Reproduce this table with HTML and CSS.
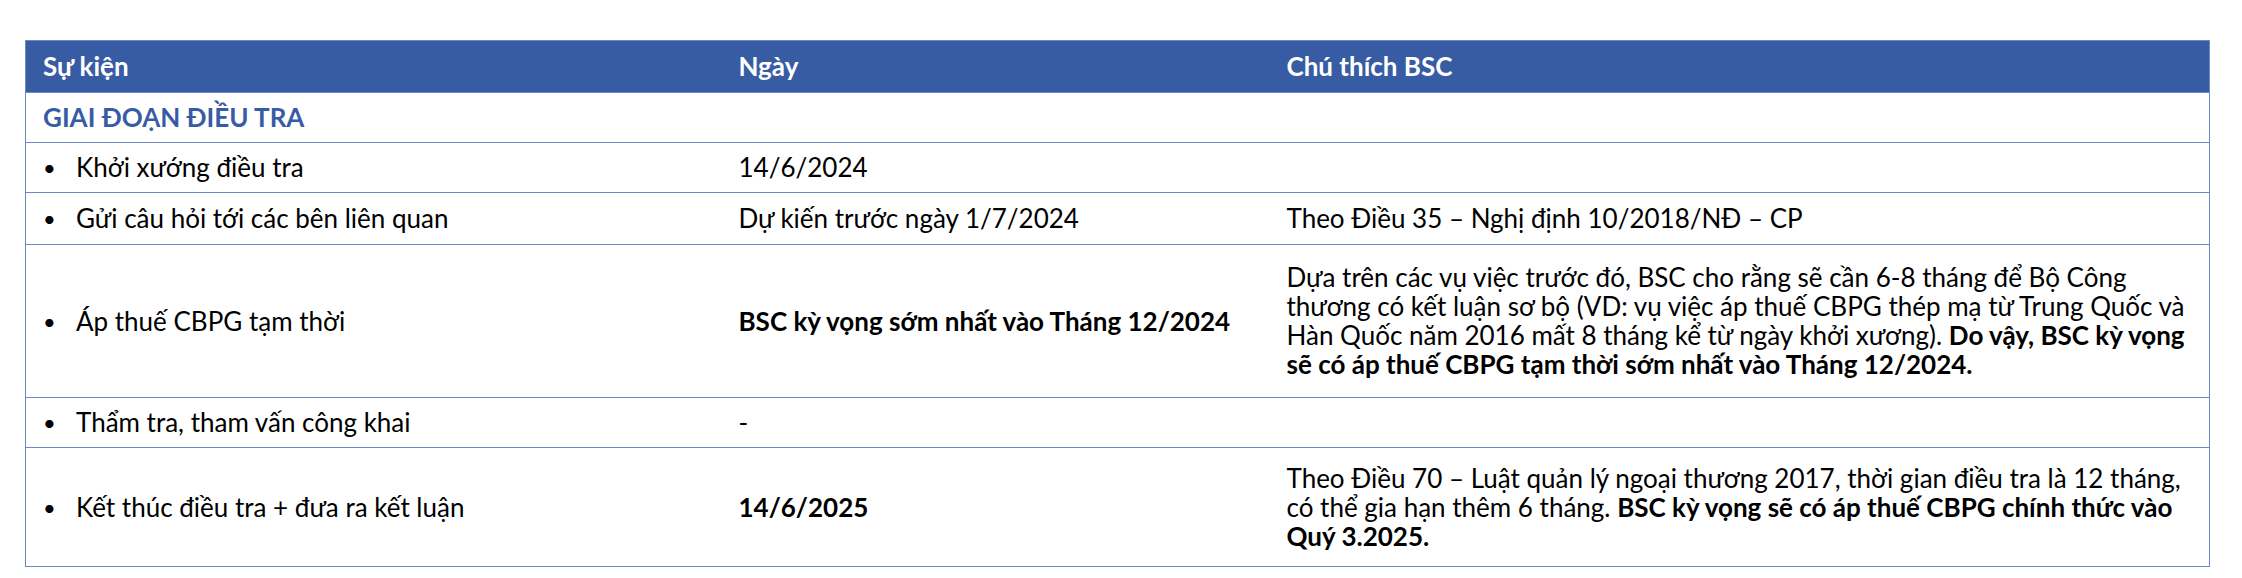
FILE: index.html
```html
<!DOCTYPE html>
<html lang="vi">
<head>
<meta charset="utf-8">
<title>Tiến trình điều tra CBPG</title>
<link rel="stylesheet" href="styles.css">
</head>
<body>
<table class="timeline">
  <colgroup>
    <col class="c-event">
    <col class="c-date">
    <col class="c-note">
  </colgroup>
  <thead>
    <tr class="row-head">
      <th>Sự kiện</th>
      <th>Ngày</th>
      <th>Chú thích BSC</th>
    </tr>
  </thead>
  <tbody>
    <tr class="row-phase">
      <td class="phase">GIAI ĐOẠN ĐIỀU TRA</td>
      <td></td>
      <td></td>
    </tr>
    <tr class="row-s">
      <td><div class="item"><span class="dot">•</span><span>Khởi xướng điều tra</span></div></td>
      <td>14/6/2024</td>
      <td></td>
    </tr>
    <tr class="row-s2">
      <td><div class="item"><span class="dot">•</span><span>Gửi câu hỏi tới các bên liên quan</span></div></td>
      <td>Dự kiến trước ngày 1/7/2024</td>
      <td>Theo Điều 35 – Nghị định 10/2018/NĐ – CP</td>
    </tr>
    <tr class="row-l">
      <td><div class="item"><span class="dot">•</span><span>Áp thuế CBPG tạm thời</span></div></td>
      <td><b>BSC kỳ vọng sớm nhất vào Tháng 12/2024</b></td>
      <td class="note">Dựa trên các vụ việc trước đó, BSC cho rằng sẽ cần 6-8 tháng để Bộ Công<br>thương có kết luận sơ bộ (VD: vụ việc áp thuế CBPG thép mạ từ Trung Quốc và<br>Hàn Quốc năm 2016 mất 8 tháng kể từ ngày khởi xương). <b>Do vậy, BSC kỳ vọng<br>sẽ có áp thuế CBPG tạm thời sớm nhất vào Tháng 12/2024.</b></td>
    </tr>
    <tr class="row-s">
      <td><div class="item"><span class="dot">•</span><span>Thẩm tra, tham vấn công khai</span></div></td>
      <td>-</td>
      <td></td>
    </tr>
    <tr class="row-m">
      <td><div class="item"><span class="dot">•</span><span>Kết thúc điều tra + đưa ra kết luận</span></div></td>
      <td><b>14/6/2025</b></td>
      <td class="note">Theo Điều 70 – Luật quản lý ngoại thương 2017, thời gian điều tra là 12 tháng,<br>có thể gia hạn thêm 6 tháng. <b>BSC kỳ vọng sẽ có áp thuế CBPG chính thức vào<br>Quý 3.2025.</b></td>
    </tr>
  </tbody>
</table>
</body>
</html>
```

FILE: styles.css
```css
html, body {
  margin: 0;
  padding: 0;
  background: #ffffff;
}

body {
  padding: 40px 0 0 25px;
  font-family: "Lato", "Noto Sans", "Liberation Sans", sans-serif;
  font-size: 26px;
  color: #000000;
}

.timeline {
  border-collapse: collapse;
  width: 2184px;
  table-layout: fixed;
  border: 1px solid #6a89c8;
}

.c-event { width: 696px; }
.c-date { width: 548px; }
.c-note { width: 940px; }

.timeline th,
.timeline td {
  padding: 0 0 0 17px;
  text-align: left;
  vertical-align: middle;
  line-height: 29px;
  white-space: nowrap;
}

.timeline td {
  border-top: 1px solid #6a89c8;
}

.row-head {
  height: 52px;
  background: #385ca4;
}

.row-head th {
  color: #ffffff;
  font-weight: 700;
}

.row-phase { height: 50px; }
.row-s { height: 50px; }
.row-s2 { height: 52px; }
.row-l { height: 153px; }
.row-m { height: 119px; }

.phase {
  color: #385ca4;
  font-weight: 700;
}

.item {
  display: flex;
  align-items: center;
}

.dot {
  width: 33px;
  flex: none;
  font-size: 22px;
}

b {
  font-weight: 700;
}
```
